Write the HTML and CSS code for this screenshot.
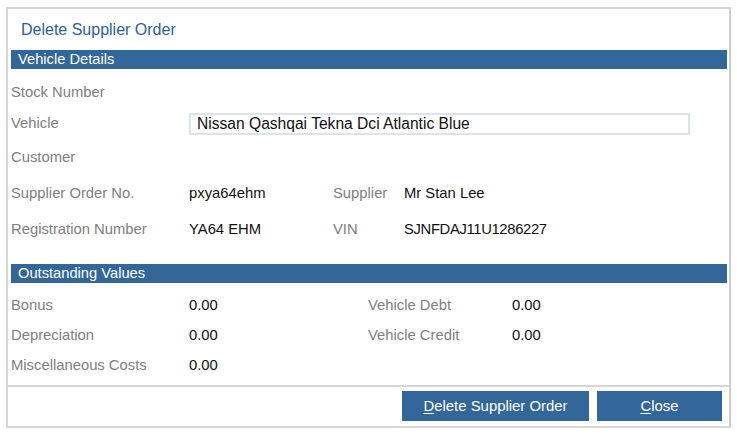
FILE: index.html
```html
<!DOCTYPE html>
<html>
<head>
<meta charset="utf-8">
<link rel="stylesheet" href="styles.css">
</head>
<body>
<div class="dialog">
  <div class="title">Delete Supplier Order</div>
  <div class="bar">Vehicle Details</div>
  <div class="grid vehicle">
    <div class="row r30"><span class="lbl">Stock Number</span></div>
    <div class="row r32"><span class="lbl">Vehicle</span><div class="input">Nissan Qashqai Tekna Dci Atlantic Blue</div></div>
    <div class="row r36"><span class="lbl">Customer</span></div>
    <div class="row r36"><span class="lbl">Supplier Order No.</span><span class="val c2">pxya64ehm</span><span class="lbl c3">Supplier</span><span class="val c4">Mr Stan Lee</span></div>
    <div class="row r36"><span class="lbl">Registration Number</span><span class="val c2">YA64 EHM</span><span class="lbl c3">VIN</span><span class="val c4 vin">SJNFDAJ11U1286227</span></div>
  </div>
  <div class="bar bar2">Outstanding Values</div>
  <div class="grid outstanding">
    <div class="row r30"><span class="lbl">Bonus</span><span class="val c2">0.00</span><span class="lbl o3">Vehicle Debt</span><span class="val o4">0.00</span></div>
    <div class="row r30"><span class="lbl">Depreciation</span><span class="val c2">0.00</span><span class="lbl o3">Vehicle Credit</span><span class="val o4">0.00</span></div>
    <div class="row r30"><span class="lbl">Miscellaneous Costs</span><span class="val c2">0.00</span></div>
  </div>
  <div class="footer">
    <button class="btn btn-del"><u>D</u>elete Supplier Order</button>
    <button class="btn btn-close"><u>C</u>lose</button>
  </div>
</div>
</body>
</html>
```
FILE: styles.css
```css
html, body {
  margin: 0;
  padding: 0;
  background: #ffffff;
}
body {
  font-family: "Liberation Sans", Arial, sans-serif;
  font-size: 14.8px;
  padding: 7px 0 0 6px;
}
.dialog {
  width: 721px;
  height: 417px;
  border: 2px solid #d6d6d6;
  border-right-color: #cfcfcf;
  display: flex;
  flex-direction: column;
  background: #fff;
}
.title {
  height: 41px;
  padding-left: 13px;
  display: flex;
  align-items: center;
  color: #2f5f93;
  font-size: 16px;
}
.bar {
  margin: 0 2px 0 3px;
  height: 19px;
  background: #336699;
  color: #fff;
  font-size: 14.7px;
  line-height: 19px;
  padding-left: 7px;
}
.bar2 {
  margin-top: 17px;
}
.grid {
  padding-left: 3px;
}
.vehicle {
  padding-top: 8px;
}
.outstanding {
  padding-top: 7px;
  padding-bottom: 5px;
}
.row {
  display: flex;
  align-items: center;
}
.r30 { height: 30px; }
.r32 { height: 32px; }
.r36 { height: 36px; }
.lbl {
  color: #808080;
  white-space: nowrap;
}
.val {
  color: #111;
  white-space: nowrap;
}
.vin { letter-spacing: -0.35px; }
.row > .lbl:first-child {
  width: 178px;
  flex: none;
}
.c2 { width: 144px; flex: none; }
.c3 { width: 71px; flex: none; }
.o3 { width: 144px; flex: none; margin-left: 35px; }
.input {
  width: 491px;
  height: 18px;
  border: 2px solid #dde3eb;
  padding-left: 6px;
  color: #111;
  font-size: 15.6px;
  line-height: 18px;
  margin-top: 2px;
  white-space: nowrap;
  overflow: hidden;
}
.footer {
  border-top: 2px solid #d6d6d6;
  flex: 1;
  display: flex;
  justify-content: flex-end;
  align-items: flex-start;
  gap: 8px;
  padding: 4px 7px 0 0;
}
.btn {
  height: 30px;
  border: none;
  background: #336699;
  color: #fff;
  font-family: "Liberation Sans", Arial, sans-serif;
  font-size: 14.9px;
  padding: 0;
  margin: 0;
}
.btn u { text-decoration-thickness: 1px; text-underline-offset: 2px; }
.btn-del { width: 187px; }
.btn-close { width: 125px; }
```
